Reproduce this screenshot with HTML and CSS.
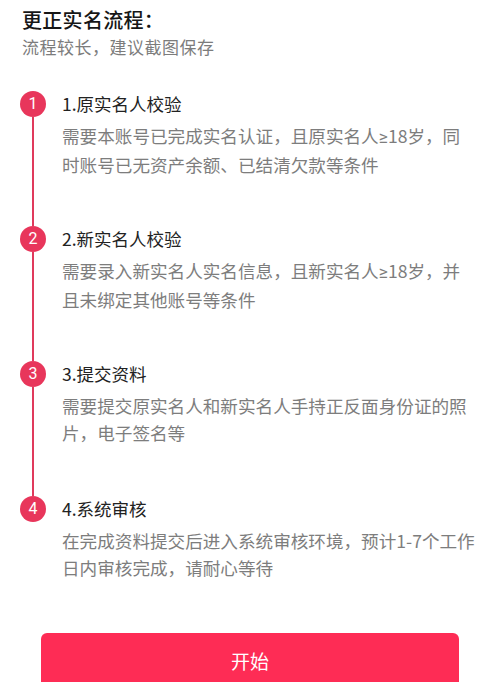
FILE: index.html
```html
<!DOCTYPE html>
<html lang="zh-CN">
<head>
<meta charset="utf-8">
<title>更正实名流程</title>
<link rel="stylesheet" href="styles.css">
</head>
<body>
<main class="page">
  <header class="head">
    <h1 class="title">更正实名流程：</h1>
    <p class="subtitle">流程较长，建议截图保存</p>
  </header>

  <ol class="steps">
    <li class="step">
      <div class="marker"><span class="dot">1</span><span class="line"></span></div>
      <div class="body">
        <h2 class="step-title">1.原实名人校验</h2>
        <p class="desc">需要本账号已完成实名认证，且原实名人<span class="latin">≥</span>18岁，同<br>时账号已无资产余额、已结清欠款等条件</p>
      </div>
    </li>
    <li class="step">
      <div class="marker"><span class="dot">2</span><span class="line"></span></div>
      <div class="body">
        <h2 class="step-title">2.新实名人校验</h2>
        <p class="desc">需要录入新实名人实名信息，且新实名人<span class="latin">≥</span>18岁，并<br>且未绑定其他账号等条件</p>
      </div>
    </li>
    <li class="step">
      <div class="marker"><span class="dot">3</span><span class="line"></span></div>
      <div class="body">
        <h2 class="step-title">3.提交资料</h2>
        <p class="desc">需要提交原实名人和新实名人手持正反面身份证的照<br>片，电子签名等</p>
      </div>
    </li>
    <li class="step step-last">
      <div class="marker"><span class="dot">4</span></div>
      <div class="body">
        <h2 class="step-title">4.系统审核</h2>
        <p class="desc">在完成资料提交后进入系统审核环境，预计1-7个工作<br>日内审核完成，请耐心等待</p>
      </div>
    </li>
  </ol>

  <div class="actions">
    <button class="start" type="button">开始</button>
  </div>
</main>
</body>
</html>
```

FILE: styles.css
```css
* {
  box-sizing: border-box;
}

html, body {
  margin: 0;
  padding: 0;
  background: #ffffff;
}

body {
  font-family: "Noto Sans CJK SC", "Noto Sans", "Liberation Sans", sans-serif;
  color: #1a1a1a;
  overflow: hidden;
  height: 682px;
}

.page {
  display: flex;
  flex-direction: column;
}

.head {
  padding: 6px 0 0 22px;
}

.title {
  margin: 0;
  font-size: 20px;
  line-height: 28px;
  font-weight: 500;
  color: #161616;
  letter-spacing: 0.3px;
}

.subtitle {
  margin: 0;
  font-size: 17px;
  line-height: 26px;
  color: #7c7c7c;
  letter-spacing: 0.5px;
}

.steps {
  list-style: none;
  margin: 31px 0 0 0;
  padding: 0 0 0 20px;
  display: flex;
  flex-direction: column;
}

.step {
  display: flex;
  gap: 16px;
  height: 135px;
}

.step-last {
  height: 86px;
}

.marker {
  width: 26px;
  display: flex;
  flex-direction: column;
  align-items: center;
  flex: none;
}

.dot {
  width: 26px;
  height: 26px;
  border-radius: 50%;
  background: #e8365b;
  color: #ffffff;
  font-family: "Roboto", "Liberation Sans", sans-serif;
  font-size: 16px;
  line-height: 26px;
  text-align: center;
  flex: none;
}

.line {
  flex: 1;
  width: 2px;
  background: #e03a5c;
}

.body {
  display: flex;
  flex-direction: column;
  gap: 5px;
}

.step-title {
  margin: 0;
  font-size: 17.5px;
  line-height: 26px;
  font-weight: 400;
  color: #222222;
}

.desc {
  margin: 0;
  font-size: 17.6px;
  line-height: 27px;
  color: #7d7d7d;
  white-space: nowrap;
}

.latin {
  font-family: "Roboto", "Liberation Sans", sans-serif;
}

.actions {
  padding: 51px 41px 0 41px;
}

.start {
  display: block;
  width: 100%;
  height: 54px;
  border: none;
  border-radius: 6px;
  background: #fe2c55;
  color: #ffffff;
  font-family: "Noto Sans CJK SC", "Noto Sans", sans-serif;
  font-size: 19px;
  padding: 0;
}
```
